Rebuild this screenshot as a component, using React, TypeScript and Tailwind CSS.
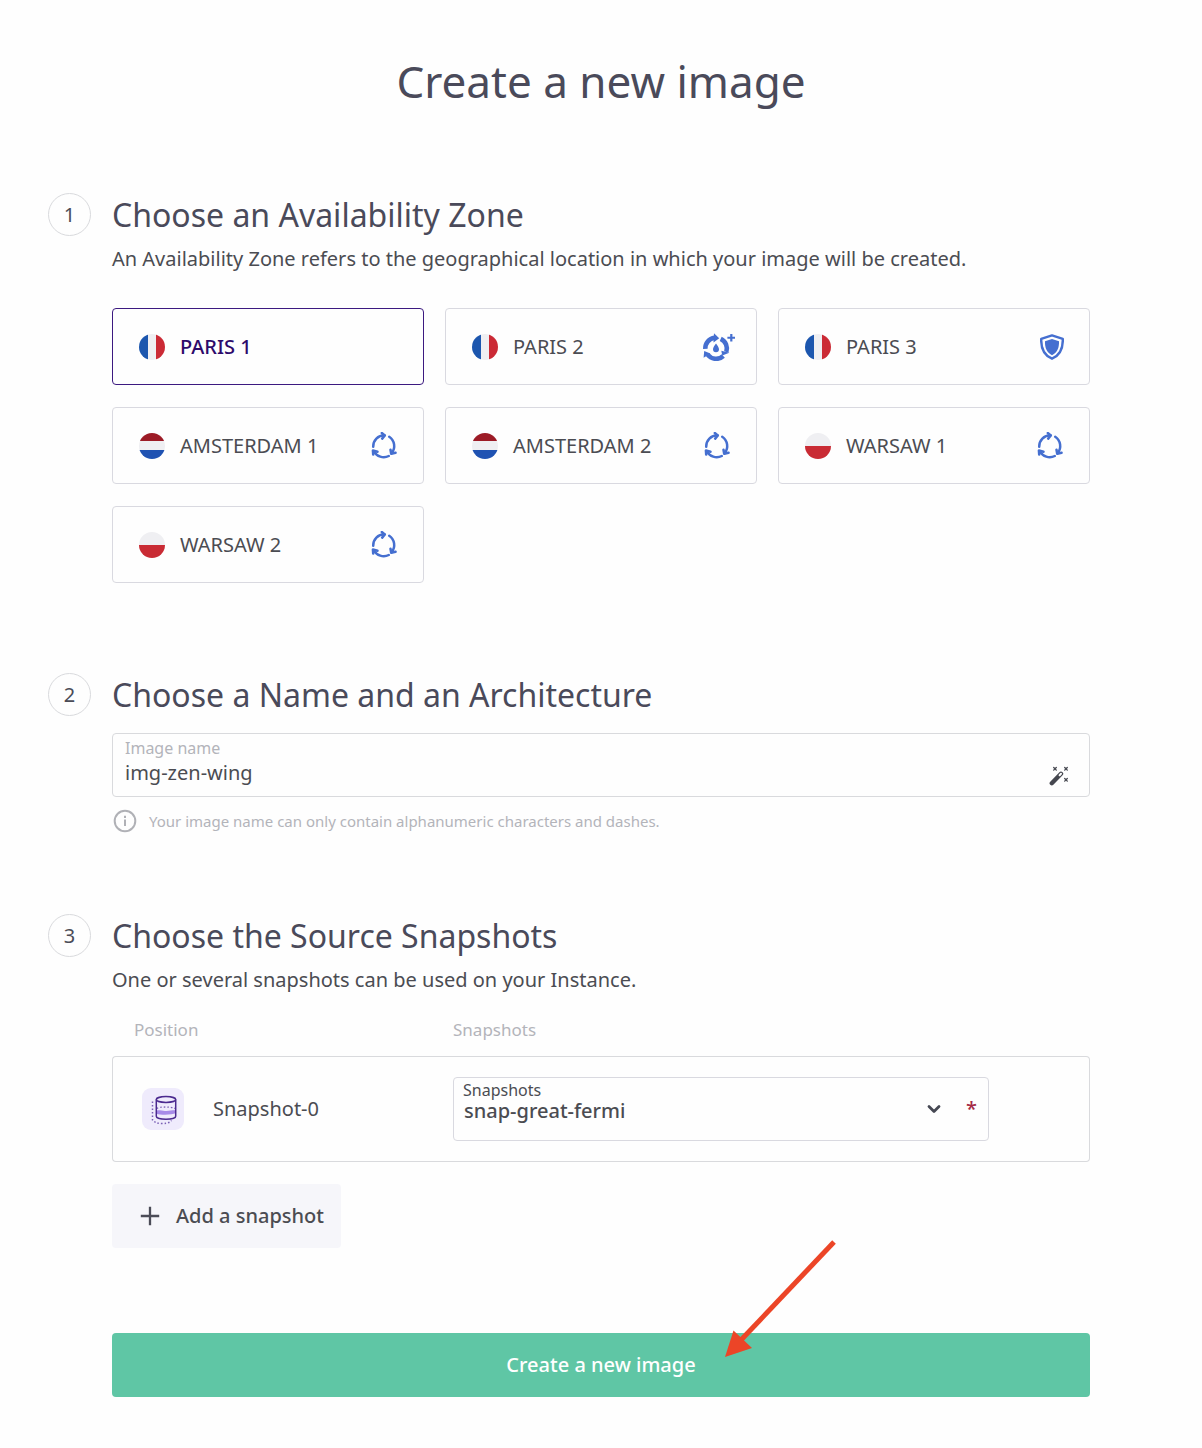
import { useState, type ReactNode } from "react";

type Country = "fr" | "nl" | "pl";
type Badge = "leaf" | "water" | "shield" | null;

const zones: { name: string; country: Country; badge: Badge }[] = [
  { name: "PARIS 1", country: "fr", badge: null },
  { name: "PARIS 2", country: "fr", badge: "water" },
  { name: "PARIS 3", country: "fr", badge: "shield" },
  { name: "AMSTERDAM 1", country: "nl", badge: "leaf" },
  { name: "AMSTERDAM 2", country: "nl", badge: "leaf" },
  { name: "WARSAW 1", country: "pl", badge: "leaf" },
  { name: "WARSAW 2", country: "pl", badge: "leaf" },
];

function Flag({ country }: { country: Country }) {
  if (country === "fr") {
    return (
      <span className="flex size-[26px] shrink-0 overflow-hidden rounded-full">
        <span className="flex-1 bg-[#1c56ae]" />
        <span className="flex-1 bg-[#efeff2]" />
        <span className="flex-1 bg-[#cb2a35]" />
      </span>
    );
  }
  if (country === "nl") {
    return (
      <span className="flex size-[26px] shrink-0 flex-col overflow-hidden rounded-full">
        <span className="flex-1 bg-[#9c1b26]" />
        <span className="flex-1 bg-[#efeff2]" />
        <span className="flex-1 bg-[#1f52b2]" />
      </span>
    );
  }
  return (
    <span className="flex size-[26px] shrink-0 flex-col overflow-hidden rounded-full">
      <span className="flex-1 bg-[#efeff2]" />
      <span className="flex-1 bg-[#c92b34]" />
    </span>
  );
}

function LoopIcon() {
  return (
    <svg
      className="mr-[25px] h-7 w-7 shrink-0"
      viewBox="10 12 28 28"
      fill="none"
      stroke="#456fd0"
      strokeWidth="2.5"
      strokeLinecap="round"
      strokeLinejoin="round"
      aria-hidden="true"
    >
      <path d="M13.200 26.800A11.200 11.200 0 0 1 24.400 15.300" />
      <path d="M21.800 13l3 2.400-2.600 3.200" />
      <path d="M29.200 16.700A11.200 11.200 0 0 1 31.600 33.200" />
      <path d="M30.500 29.800l.7 3.900 4.400-.9" />
      <path d="M28.800 36A11.200 11.200 0 0 1 13.800 31.200" />
      <path d="M13.200 34.600l-.3-4.100 4.600 1.200" />
    </svg>
  );
}

function WaterIcon() {
  return (
    <svg className="mr-[21px] h-7 w-[33px] shrink-0" viewBox="12 13 33 28" fill="#456fd0" aria-hidden="true">
      <g fill="none" stroke="#456fd0" strokeWidth="4.600">
        <path d="M15.300 28.800A10.700 10.700 0 0 1 24.500 17.800" />
        <path d="M30.700 18.800A10.700 10.700 0 0 1 36.300 32" />
        <path d="M33.300 36A10.700 10.700 0 0 1 17.600 34.700" />
      </g>
      <path d="M24 13.300l5.200 4.900-5.700 4.300z" />
      <path d="M39.300 32.800l-7 2.600-1-4.600z" />
      <path d="M13.600 37.800l.6-6.800 6.200 2.600z" />
      <path d="M26 23.400c1.500 2.200 3 4 3 5.900a3 3 0 0 1-6 0c0-1.900 1.500-3.700 3-5.900z" />
      <path d="M40.200 13.900h2.200v2.800h2.800v2h-2.800v2.800h-2.200v-2.800h-2.800v-2h2.800z" />
    </svg>
  );
}

function ShieldIcon() {
  return (
    <svg className="mr-[25px] h-[26px] w-6 shrink-0" viewBox="0 0 24 26" aria-hidden="true">
      <path
        d="M12 1.400L22.800 4.800C23.100 13.500 21 21 12 24.700 3 21 .9 13.500 1.200 4.800z"
        fill="none"
        stroke="#456fd0"
        strokeWidth="2.400"
        strokeLinejoin="round"
      />
      <path d="M12 5L19 7.300C19.200 13.600 17.500 18.500 12 21.200 6.500 18.500 4.800 13.600 5 7.300z" fill="#456fd0" />
    </svg>
  );
}

function WandIcon() {
  return (
    <svg className="h-5 w-5" viewBox="0 0 20 20" aria-hidden="true">
      <path d="M2.800 17.200L12 7.800" stroke="#45474f" strokeWidth="4.400" strokeLinecap="round" />
      <path d="M10.600 9.200L12 7.800" stroke="#fefefe" strokeWidth="2" strokeLinecap="round" />
      <g stroke="#45474f" strokeWidth="1.300" strokeLinecap="round">
        <path d="M4.700 1.500l2.600 2.600M7.300 1.500l-2.600 2.600" />
        <path d="M15.700 1.500l2.600 2.600M18.300 1.500l-2.600 2.600" />
        <path d="M15.700 12.500l2.600 2.600M18.300 12.500l-2.600 2.600" />
      </g>
    </svg>
  );
}

function VolumeIcon() {
  return (
    <svg className="block h-[42px] w-[42px]" viewBox="0 0 42 42" fill="none" aria-hidden="true">
      <rect width="42" height="42" rx="9" fill="#efebfc" />
      <path d="M10.500 13.500v18.500c1 2 5 3.500 10 3.500s7.500-1 9-3" stroke="#7a5fb5" strokeWidth="1.500" strokeDasharray="1.500 2" />
      <path d="M15 20.500c3-2 14-2 18 0" stroke="#7a5fb5" strokeWidth="1.300" strokeDasharray="1.500 2" />
      <path d="M14.500 22.500c5-1 7 .5 10 .5s6-.9 9-.7v3c-3 1.700-15 2-19 .4z" fill="#a78be8" />
      <ellipse cx="24" cy="11.500" rx="9.700" ry="2.900" stroke="#4b2a8f" strokeWidth="1.500" />
      <path d="M14.300 11.500v16.800c0 1.700 4.300 3 9.700 3s9.700-1.300 9.700-3V11.500" stroke="#4b2a8f" strokeWidth="1.500" />
    </svg>
  );
}

function Step({ number, title, children }: { number: number; title: string; children: ReactNode }) {
  return (
    <section className="flex gap-[21px]">
      <span className="flex size-[43px] shrink-0 items-center justify-center rounded-full border border-[#d9dadd] text-[20px] leading-none text-[#4b4c57]">
        {number}
      </span>
      <div className="min-w-0 flex-1">
        <h2 className="text-[32px] leading-[44px] text-[#4a4a5a]">{title}</h2>
        {children}
      </div>
    </section>
  );
}

export default function App() {
  const [zone, setZone] = useState("PARIS 1");
  const [name, setName] = useState("img-zen-wing");

  return (
    <main className="min-h-screen bg-[#fefefe] pt-[49px] pr-28 pb-[51px] pl-12 font-['Noto_Sans',sans-serif] text-[#4b4c52]">
      <h1 className="-mr-16 text-center text-[44px] leading-[64px] text-[#4a4a5a]">Create a new image</h1>

      <form className="mt-20" onSubmit={(e) => e.preventDefault()}>
        <Step number={1} title="Choose an Availability Zone">
          <p className="mt-2 text-[20px] leading-7">
            An Availability Zone refers to the geographical location in which your image will be created.
          </p>
          <div role="radiogroup" aria-label="Availability Zone" className="mt-[35px] grid grid-cols-3 gap-x-[21px] gap-y-[22px]">
            {zones.map((z) => (
              <label
                key={z.name}
                className="relative flex h-[77px] cursor-pointer items-center rounded border border-[#d9d9e0] pl-[26px] text-[20px] has-checked:border-[#3c1a80] has-checked:font-medium has-checked:text-[#2d0a6b]"
              >
                <input
                  type="radio"
                  name="zone"
                  className="sr-only"
                  checked={zone === z.name}
                  onChange={() => setZone(z.name)}
                />
                <Flag country={z.country} />
                <span className="ml-[15px] flex-1 leading-7 whitespace-nowrap">{z.name}</span>
                {z.badge === "leaf" && <LoopIcon />}
                {z.badge === "water" && <WaterIcon />}
                {z.badge === "shield" && <ShieldIcon />}
              </label>
            ))}
          </div>
        </Step>

        <div className="mt-[90px]">
          <Step number={2} title="Choose a Name and an Architecture">
            <div className="mt-4 flex h-16 items-end justify-between rounded border border-[#d9dadd] pr-5 pl-3">
              <div className="flex flex-1 flex-col self-stretch pt-1">
                <label htmlFor="image-name" className="text-[16px] leading-5 text-[#b3b4ba]">
                  Image name
                </label>
                <input
                  id="image-name"
                  className="h-[30px] w-full bg-transparent text-[20px] outline-none"
                  value={name}
                  onChange={(e) => setName(e.target.value)}
                />
              </div>
              <button type="button" aria-label="Generate a name" className="mb-[10px]">
                <WandIcon />
              </button>
            </div>
            <p className="mt-3 flex items-center gap-3 text-[15px] leading-6 text-[#b3b4ba]">
              <svg className="ml-px h-6 w-6 shrink-0" viewBox="0 0 24 24" fill="none" stroke="#b0b1b6" aria-hidden="true">
                <circle cx="12" cy="12" r="10.300" strokeWidth="2" />
                <path d="M12 10.500v6.500M12 6.800v2.200" strokeWidth="2" />
              </svg>
              Your image name can only contain alphanumeric characters and dashes.
            </p>
          </Step>
        </div>

        <div className="mt-[81px]">
          <Step number={3} title="Choose the Source Snapshots">
            <p className="mt-2 text-[20px] leading-7">One or several snapshots can be used on your Instance.</p>
            <table className="mt-6 w-full table-fixed border-separate border-spacing-0">
              <thead>
                <tr className="text-left text-[17px] leading-6 text-[#b3b4ba]">
                  <th className="w-[341px] pb-[14px] pl-[22px] font-normal">Position</th>
                  <th className="pb-[14px] font-normal">Snapshots</th>
                </tr>
              </thead>
              <tbody>
                <tr>
                  <td className="h-[106px] rounded-l border border-r-0 border-[#d9dadd] pl-[29px]">
                    <div className="flex items-center gap-[29px] text-[20px]">
                      <VolumeIcon />
                      Snapshot-0
                    </div>
                  </td>
                  <td className="rounded-r border border-l-0 border-[#d9dadd] pr-[100px]">
                    <div className="relative h-16 rounded border border-[#d9d9e0]">
                      <label htmlFor="snapshot" className="absolute top-0.5 left-[9px] text-[16px] leading-5">
                        Snapshots
                      </label>
                      <select
                        id="snapshot"
                        required
                        className="h-full w-full appearance-none bg-transparent pt-1 pl-2.5 text-[20px] font-medium outline-none"
                      >
                        <option>snap-great-fermi</option>
                      </select>
                      <span className="pointer-events-none absolute inset-y-0 right-[11px] flex items-center gap-6">
                        <svg className="h-4 w-4" viewBox="0 0 16 16" fill="none" stroke="#464853" strokeWidth="2.800" strokeLinecap="round" strokeLinejoin="round" aria-hidden="true">
                          <path d="M3 5.500l5 5 5-5" />
                        </svg>
                        <span className="text-[20px] leading-none font-medium text-[#a52b45]">*</span>
                      </span>
                    </div>
                  </td>
                </tr>
              </tbody>
            </table>
            <button
              type="button"
              className="mt-[22px] flex h-16 items-center gap-4 rounded bg-[#f6f6fa] pr-[17px] pl-7 text-[20px] font-medium"
            >
              <svg className="h-5 w-5" viewBox="0 0 20 20" stroke="#4b4c57" strokeWidth="2.300" aria-hidden="true">
                <path d="M10 .8v18.400M.8 10h18.400" />
              </svg>
              Add a snapshot
            </button>
            <div className="relative mt-[85px]">
              <button type="submit" className="h-16 w-full rounded bg-[#5fc6a5] text-[20px] font-medium text-white">
                Create a new image
              </button>
              <svg className="pointer-events-none absolute bottom-[38px] left-1/2 ml-[123px] h-[120px] w-[112px]" viewBox="0 0 112 120" aria-hidden="true">
                <path d="M110 3L17 101" stroke="#ec4527" strokeWidth="5" />
                <path d="M9.500 91.500L28 109 1 118z" fill="#ec4527" />
              </svg>
            </div>
          </Step>
        </div>
      </form>
    </main>
  );
}
